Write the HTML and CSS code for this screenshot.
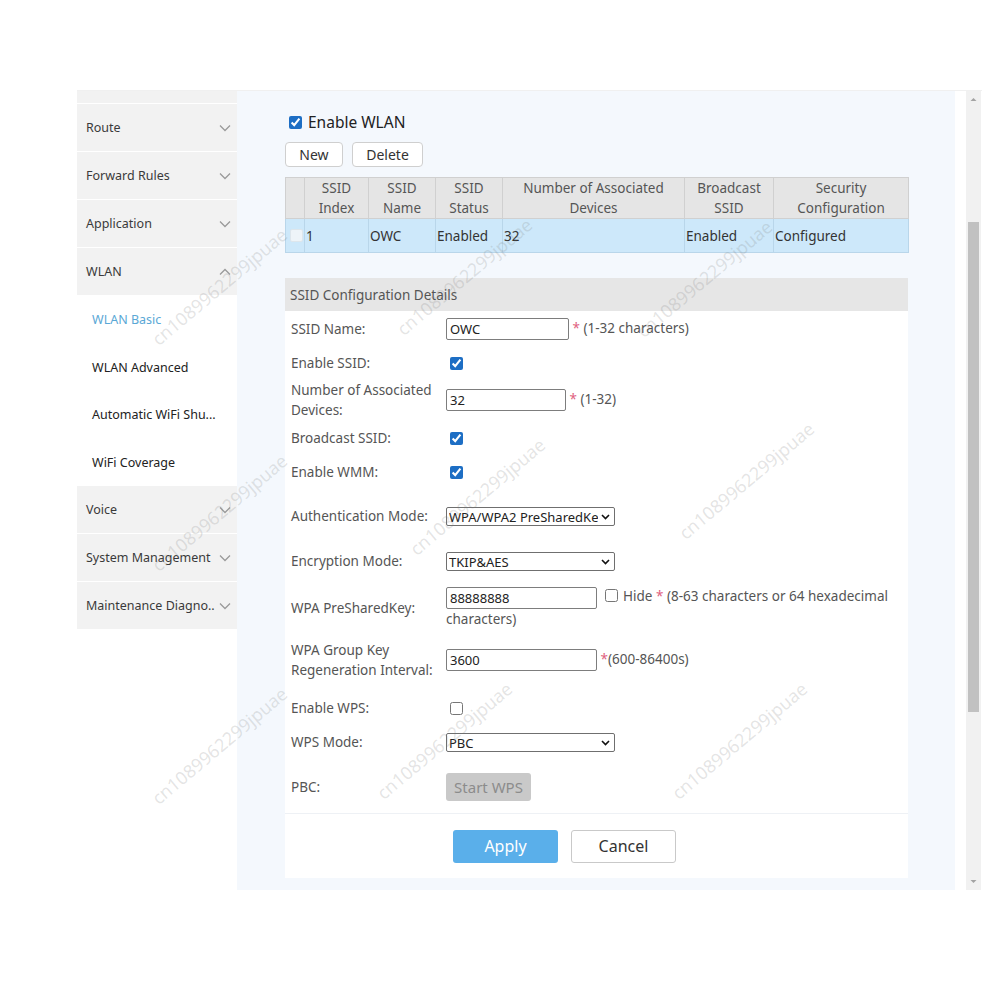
FILE: index.html
```html
<!DOCTYPE html>
<html lang="en">
<head>
    <meta charset="UTF-8">
    <meta name="viewport" content="width=device-width, initial-scale=1.0">
    <title>WLAN Basic</title>
    <link rel="stylesheet" href="styles.css">
</head>
<body>
    <div class="frame">
        <!-- Left menu -->
        <div class="sidebar">
            <div class="menu-cut"></div>
            <div class="menu-item">Route <svg class="chev" width="12" height="8" viewBox="0 0 12 8"><path d="M1 1.5l5 5 5-5"/></svg></div>
            <div class="menu-item">Forward Rules <svg class="chev" width="12" height="8" viewBox="0 0 12 8"><path d="M1 1.5l5 5 5-5"/></svg></div>
            <div class="menu-item">Application <svg class="chev" width="12" height="8" viewBox="0 0 12 8"><path d="M1 1.5l5 5 5-5"/></svg></div>
            <div class="menu-item">WLAN <svg class="chev" width="12" height="8" viewBox="0 0 12 8"><path d="M1 6.5l5-5 5 5"/></svg></div>
            <div class="submenu">
                <div class="sub-item active">WLAN Basic</div>
                <div class="sub-item">WLAN Advanced</div>
                <div class="sub-item">Automatic WiFi Shu...</div>
                <div class="sub-item">WiFi Coverage</div>
            </div>
            <div class="menu-item">Voice <svg class="chev" width="12" height="8" viewBox="0 0 12 8"><path d="M1 1.5l5 5 5-5"/></svg></div>
            <div class="menu-item">System Management <svg class="chev" width="12" height="8" viewBox="0 0 12 8"><path d="M1 1.5l5 5 5-5"/></svg></div>
            <div class="menu-item">Maintenance Diagno.. <svg class="chev" width="12" height="8" viewBox="0 0 12 8"><path d="M1 1.5l5 5 5-5"/></svg></div>
        </div>

        <!-- Main content -->
        <div class="main">
            <label class="enable-wlan"><input type="checkbox" checked> Enable WLAN</label>
            <div class="toolbar">
                <button class="btn btn-new">New</button>
                <button class="btn btn-delete">Delete</button>
            </div>

            <table class="ssid-table">
                <colgroup>
                    <col style="width:19px"><col style="width:64px"><col style="width:67px"><col style="width:67px">
                    <col style="width:182px"><col style="width:89px"><col style="width:135px">
                </colgroup>
                <tr>
                    <th></th>
                    <th>SSID<br>Index</th>
                    <th>SSID<br>Name</th>
                    <th>SSID<br>Status</th>
                    <th>Number of Associated<br>Devices</th>
                    <th>Broadcast<br>SSID</th>
                    <th>Security<br>Configuration</th>
                </tr>
                <tr>
                    <td><span class="row-check"></span></td>
                    <td>1</td>
                    <td>OWC</td>
                    <td>Enabled</td>
                    <td>32</td>
                    <td>Enabled</td>
                    <td>Configured</td>
                </tr>
            </table>

            <div class="config">
                <div class="config-title">SSID Configuration Details</div>
                <div class="config-body">
                    <div class="row r-name">
                        <div class="label">SSID Name:</div>
                        <div class="field"><input class="text-input w123" type="text" value="OWC"> <span class="req">*</span> (1-32 characters)</div>
                    </div>
                    <div class="row r-ssid">
                        <div class="label">Enable SSID:</div>
                        <div class="field"><input class="field-check" type="checkbox" checked></div>
                    </div>
                    <div class="row r-devices">
                        <div class="label">Number of Associated<br>Devices:</div>
                        <div class="field"><input class="text-input w120" type="text" value="32"> <span class="req">*</span> (1-32)</div>
                    </div>
                    <div class="row r-std">
                        <div class="label">Broadcast SSID:</div>
                        <div class="field"><input class="field-check" type="checkbox" checked></div>
                    </div>
                    <div class="row r-std">
                        <div class="label">Enable WMM:</div>
                        <div class="field"><input class="field-check" type="checkbox" checked></div>
                    </div>
                    <div class="row r-auth">
                        <div class="label">Authentication Mode:</div>
                        <div class="field">
                            <div class="select-box">
                                <select><option>WPA/WPA2 PreSharedKey</option></select>
                                <svg class="select-arrow" width="9" height="6" viewBox="0 0 9 6"><path d="M1 1l3.5 3.5L8 1"/></svg>
                            </div>
                        </div>
                    </div>
                    <div class="row r-enc">
                        <div class="label">Encryption Mode:</div>
                        <div class="field">
                            <div class="select-box">
                                <select><option>TKIP&amp;AES</option></select>
                                <svg class="select-arrow" width="9" height="6" viewBox="0 0 9 6"><path d="M1 1l3.5 3.5L8 1"/></svg>
                            </div>
                        </div>
                    </div>
                    <div class="row r-psk">
                        <div class="label">WPA PreSharedKey:</div>
                        <div class="field"><input class="text-input w151" type="text" value="88888888"> <input class="hide-check" type="checkbox"> Hide <span class="req">*</span> (8-63 characters or 64 hexadecimal characters)</div>
                    </div>
                    <div class="row r-group">
                        <div class="label">WPA Group Key<br>Regeneration Interval:</div>
                        <div class="field"><input class="text-input w151" type="text" value="3600"> <span class="req">*</span>(600-86400s)</div>
                    </div>
                    <div class="row r-wps">
                        <div class="label">Enable WPS:</div>
                        <div class="field"><input class="field-check" type="checkbox"></div>
                    </div>
                    <div class="row r-std">
                        <div class="label">WPS Mode:</div>
                        <div class="field">
                            <div class="select-box">
                                <select><option>PBC</option></select>
                                <svg class="select-arrow" width="9" height="6" viewBox="0 0 9 6"><path d="M1 1l3.5 3.5L8 1"/></svg>
                            </div>
                        </div>
                    </div>
                    <div class="row r-pbc">
                        <div class="label">PBC:</div>
                        <div class="field"><button class="btn-wps" disabled>Start WPS</button></div>
                    </div>
                </div>
                <div class="config-foot">
                    <button class="btn-apply">Apply</button>
                    <button class="btn-cancel">Cancel</button>
                </div>
            </div>
        </div>

        <div class="gutter"></div>

        <!-- Scrollbar -->
        <div class="scrollbar">
            <svg class="scroll-arrow" width="15" height="17" viewBox="0 0 15 17"><path d="M4.5 10h6l-3-3z"/></svg>
            <div class="scroll-track"><div class="scroll-thumb"></div></div>
            <svg class="scroll-arrow" width="15" height="17" viewBox="0 0 15 17"><path d="M4.5 7h6l-3 3z"/></svg>
        </div>
    </div>

    <!-- Watermarks -->
    <div class="watermarks">
        <span class="wm" style="left:160px; top:330px">cn1089962299jpuae</span>
        <span class="wm" style="left:405px; top:320px">cn1089962299jpuae</span>
        <span class="wm" style="left:645px; top:322px">cn1089962299jpuae</span>
        <span class="wm" style="left:160px; top:556px">cn1089962299jpuae</span>
        <span class="wm" style="left:418px; top:540px">cn1089962299jpuae</span>
        <span class="wm" style="left:687px; top:524px">cn1089962299jpuae</span>
        <span class="wm" style="left:160px; top:789px">cn1089962299jpuae</span>
        <span class="wm" style="left:385px; top:784px">cn1089962299jpuae</span>
        <span class="wm" style="left:680px; top:784px">cn1089962299jpuae</span>
    </div>
</body>
</html>
```

FILE: styles.css
```css
body {
    margin: 0;
    background-color: #fff;
    font-family: "Noto Sans", "Open Sans", sans-serif;
    color: #333;
}
.frame {
    display: flex;
    margin: 90px 0 0 77px;
    height: 800px;
    border-top: 1px solid #f0f0f0;
    box-sizing: border-box;
}

/* sidebar */
.sidebar {
    width: 160px;
    flex: none;
    background-color: #fff;
}
.menu-cut {
    height: 12px;
    background-color: #f2f2f2;
    border-bottom: 1px solid #fff;
}
.menu-item {
    height: 47px;
    background-color: #f2f2f2;
    border-bottom: 1px solid #fff;
    display: flex;
    align-items: center;
    justify-content: space-between;
    padding: 0 6px 0 9px;
    font-size: 12.5px;
    color: #3a3a3a;
}
.chev path {
    fill: none;
    stroke: #9a9a9a;
    stroke-width: 1.3;
}
.submenu {
    background-color: #fff;
}
.sub-item {
    height: 47.5px;
    display: flex;
    align-items: center;
    padding-left: 15px;
    font-size: 12.5px;
    color: #222;
}
.sub-item.active {
    color: #5aa8d6;
}

/* main */
.main {
    width: 718px;
    flex: none;
    box-sizing: border-box;
    background-color: #f4f8fd;
    padding: 21px 47px 13px 48px;
}
.enable-wlan {
    display: flex;
    align-items: center;
    height: 20px;
    font-size: 15.5px;
    color: #222;
    margin-bottom: 10px;
}
.enable-wlan input {
    margin: 0 6px 0 4px;
}
input[type="checkbox"] {
    accent-color: #1d6ec4;
    width: 13px;
    height: 13px;
}
.toolbar {
    display: flex;
    gap: 9px;
    margin-bottom: 10px;
}
.btn {
    height: 25px;
    background-color: #fff;
    border: 1px solid #cfcfcf;
    border-radius: 4px;
    font-family: inherit;
    font-size: 14px;
    color: #333;
    padding: 0;
}
.btn-new {
    width: 58px;
}
.btn-delete {
    width: 71px;
}

/* table */
.ssid-table {
    width: 623px;
    border-collapse: collapse;
    table-layout: fixed;
    font-size: 13.5px;
    margin-bottom: 25px;
}
.ssid-table th {
    height: 40px;
    padding: 0;
    background-color: #e5e5e5;
    border: 1px solid #d0d0d0;
    font-weight: normal;
    color: #555;
    line-height: 20px;
}
.ssid-table td {
    height: 33px;
    padding: 0 0 0 1px;
    background-color: #cde8fa;
    border: 1px solid #b9d6ea;
    color: #333;
}
.row-check {
    display: block;
    width: 11px;
    height: 11px;
    margin-left: 3px;
    background-color: #eef4f8;
    border: 1px solid #dde6ec;
    border-radius: 2px;
}

/* config form */
.config {
    background-color: #fff;
}
.config-title {
    height: 33px;
    display: flex;
    align-items: center;
    padding-left: 5px;
    background-color: #e6e6e6;
    font-size: 13.5px;
    color: #555;
}
.config-body {
    padding: 0 10px 5px 6px;
}
.row {
    display: flex;
    align-items: center;
}
.r-name { height: 36px; }
.r-ssid { height: 32px; }
.r-devices { height: 42px; }
.r-std { height: 34px; }
.r-auth { height: 34px; margin-top: 10px; }
.r-enc { height: 34px; margin-top: 11px; }
.r-psk { height: 60px; }
.r-group { height: 44px; }
.r-wps { height: 34px; margin-top: 9px; }
.r-pbc { height: 42px; margin-top: 7px; }
.label {
    width: 155px;
    flex: none;
    font-size: 13.5px;
    line-height: 20px;
    color: #555;
}
.field {
    flex: 1;
    font-size: 13.5px;
    line-height: 21px;
    color: #555;
}
.field-check {
    display: block;
    margin: 0 0 0 4px;
}
.req {
    color: #e0607e;
}
.text-input {
    height: 22px;
    box-sizing: border-box;
    border: 1px solid #7d7d7d;
    border-radius: 2px;
    padding: 0 3px;
    font-family: inherit;
    font-size: 13px;
    color: #222;
    vertical-align: middle;
}
.w123 { width: 123px; }
.w120 { width: 120px; }
.w151 { width: 151px; }
.hide-check {
    margin: 0 2px 0 4px;
    vertical-align: -1px;
}
.select-box {
    position: relative;
    width: 169px;
    height: 19px;
}
.select-box select {
    appearance: none;
    width: 100%;
    height: 19px;
    box-sizing: border-box;
    border: 1px solid #6f6f6f;
    border-radius: 2px;
    background-color: #fff;
    padding: 0 16px 0 2px;
    font-family: inherit;
    font-size: 13px;
    color: #222;
}
.select-arrow {
    position: absolute;
    right: 5px;
    top: 7px;
}
.select-arrow path {
    fill: none;
    stroke: #111;
    stroke-width: 1.6;
}
.btn-wps {
    width: 85px;
    height: 28px;
    background-color: #c9c9c9;
    border: none;
    border-radius: 3px;
    font-family: inherit;
    font-size: 15px;
    color: #8c8c8c;
    padding: 0;
}
.config-foot {
    height: 64px;
    border-top: 1px solid #eef1f5;
    display: flex;
    align-items: center;
    gap: 13px;
    padding-left: 168px;
}
.btn-apply,
.btn-cancel {
    width: 105px;
    height: 33px;
    border-radius: 3px;
    font-family: inherit;
    font-size: 16px;
    padding: 0;
}
.btn-apply {
    background-color: #5aafea;
    border: none;
    color: #fff;
}
.btn-cancel {
    background-color: #fff;
    border: 1px solid #c9c9c9;
    color: #333;
}

/* scrollbar */
.gutter {
    width: 11px;
    flex: none;
    background-color: #fff;
}
.scrollbar {
    width: 15px;
    flex: none;
    display: flex;
    flex-direction: column;
    background-color: #f1f1f1;
}
.scroll-arrow {
    flex: none;
}
.scroll-arrow path {
    fill: #a3a3a3;
}
.scroll-track {
    flex: 1;
}
.scroll-thumb {
    margin: 114px 2px 0 2px;
    height: 490px;
    background-color: #c1c1c1;
}

/* watermark overlay */
.watermarks {
    position: absolute;
    top: 0;
    left: 0;
    pointer-events: none;
}
.wm {
    position: absolute;
    font-size: 18px;
    line-height: 18px;
    white-space: nowrap;
    color: rgba(120, 120, 120, 0.2);
    transform: rotate(-40deg);
    transform-origin: 0 100%;
}
```
